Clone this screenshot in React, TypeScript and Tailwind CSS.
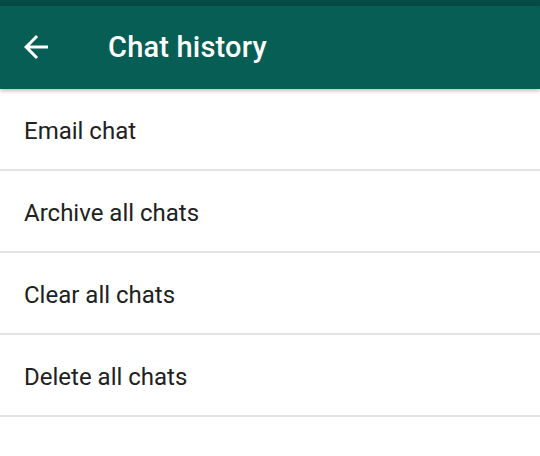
import React from 'react';

const items = ['Email chat', 'Archive all chats', 'Clear all chats', 'Delete all chats'];

const backIcon = (
  <svg className="w-9 h-9" viewBox="0 0 24 24" fill="white">
    <path d="M20 11H7.83l5.59-5.59L12 4l-8 8 8 8 1.41-1.41L7.83 13H20v-2z" />
  </svg>
);

export default function App() {
  return (
    <div className="w-[540px] h-[456px] bg-white overflow-hidden" style={{ fontFamily: 'Roboto, "Noto Sans", sans-serif' }}>
      {/* status strip */}
      <div className="h-[6px] bg-[#054d44]" />
      {/* toolbar */}
      <div className="relative z-10 h-[83px] bg-[#075e54] flex items-center shadow-[0_2px_4px_rgba(0,0,0,0.25)]">
        <div className="ml-[18px] -mt-[1px]">{backIcon}</div>
        <h1 className="ml-[54px] text-white text-[29px] font-medium tracking-[0.2px]">Chat history</h1>
      </div>
      {/* menu */}
      <div>
        {items.map(item => (
          <div key={item} className="h-[82px] flex items-center border-b-2 border-[#e3e3e3] px-6">
            <span className="text-[24px] text-[#212121] pt-[4px]">{item}</span>
          </div>
        ))}
      </div>
    </div>
  );
}
